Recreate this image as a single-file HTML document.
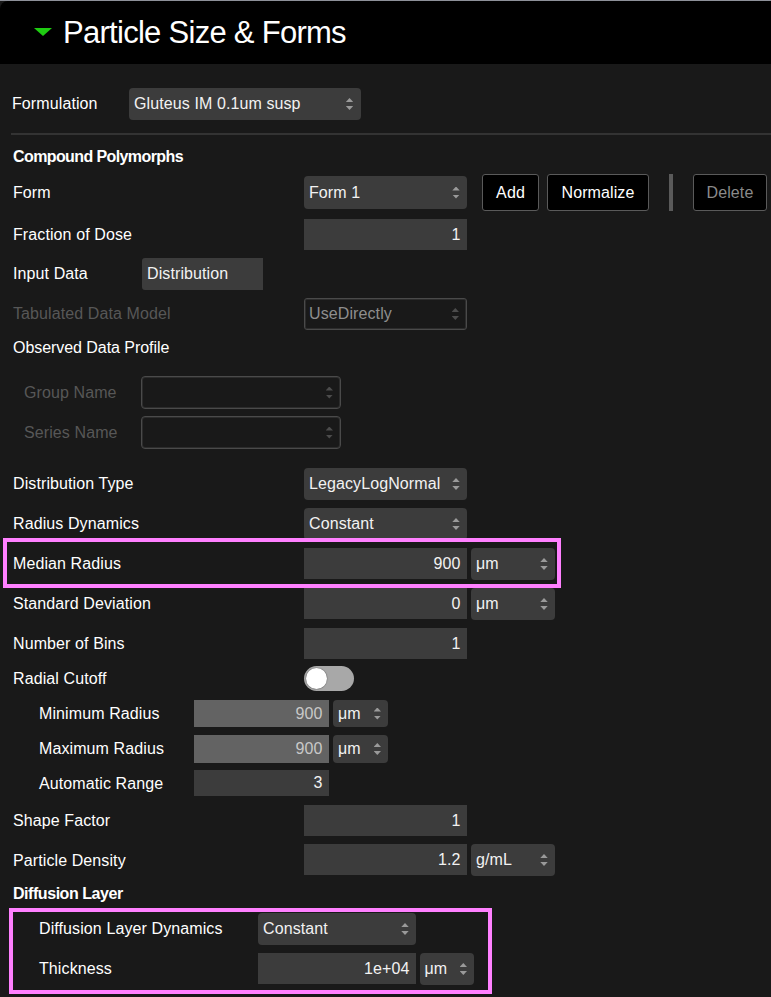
<!DOCTYPE html>
<html><head><meta charset="utf-8">
<style>
html,body{margin:0;padding:0;}
body{width:771px;height:997px;background:#191919;position:relative;overflow:hidden;font-family:"Liberation Sans",sans-serif;font-size:16px;color:#fff;letter-spacing:0.1px;}
.a{position:absolute;}
.topline{left:0;top:0;width:771px;height:1px;background:#8d9099;}
.hdr{left:0;top:1px;width:771px;height:63px;background:#000;border-top-left-radius:8px;}
.tri{left:34px;top:28px;width:0;height:0;border-left:9px solid transparent;border-right:9px solid transparent;border-top:8px solid #1fcc12;}
.title{left:63px;top:1px;height:63px;line-height:63px;font-size:31px;letter-spacing:-0.72px;color:#fff;white-space:nowrap;}
.lbl{display:flex;align-items:center;white-space:nowrap;left:13px;}
.dis{color:#575757;}
.bold{font-weight:bold;letter-spacing:-0.6px;}
.box{background:#3c3c3c;box-sizing:border-box;}
.combo{background:#3c3c3c;border-radius:4px;box-sizing:border-box;display:flex;align-items:center;padding-left:5px;white-space:nowrap;color:#f2f2f2;}
.inp{background:#3c3c3c;border-radius:0;box-sizing:border-box;display:flex;align-items:center;justify-content:flex-end;padding-right:6.5px;white-space:nowrap;color:#f2f2f2;}
.arr{position:absolute;right:7.3px;top:50%;width:7.4px;height:12px;margin-top:-6px;}
.arr:before{content:"";position:absolute;left:0;top:0;width:7.4px;height:4px;background:#9a9a9a;clip-path:polygon(50% 0,100% 100%,0 100%);}
.arr:after{content:"";position:absolute;left:0;top:8px;width:7.4px;height:4px;background:#9a9a9a;clip-path:polygon(0 0,100% 0,50% 100%);}
.dz:before,.dz:after{background:#4c4c4c;}
.btn{background:#000;border:1px solid #5a5a5a;border-radius:3px;box-sizing:border-box;display:flex;align-items:center;justify-content:center;color:#fff;white-space:nowrap;}
.pink{border:4px solid #ff80ff;box-sizing:border-box;}
</style></head>
<body>
<div class="a topline"></div>
<div class="a hdr"></div>
<div class="a tri"></div>
<div class="a title">Particle Size &amp; Forms</div>

<!-- Formulation -->
<div class="a lbl" style="left:12px;top:88px;height:32px;">Formulation</div>
<div class="a combo" style="left:129px;top:88px;width:231.5px;height:32px;">Gluteus IM 0.1um susp<span class="arr"></span></div>
<div class="a" style="left:11px;top:133px;width:760px;height:2px;background:#333;"></div>

<div class="a lbl bold" style="top:146px;height:22px;">Compound Polymorphs</div>

<div class="a lbl" style="top:176px;height:33px;">Form</div>
<div class="a combo" style="left:304px;top:176px;width:163px;height:33px;">Form 1<span class="arr"></span></div>
<div class="a btn" style="left:482px;top:174px;width:57px;height:37px;">Add</div>
<div class="a btn" style="left:547px;top:174px;width:102px;height:37px;">Normalize</div>
<div class="a" style="left:669px;top:174px;width:4px;height:37px;background:#5a5a5a;"></div>
<div class="a btn" style="left:693px;top:174px;width:74px;height:37px;color:#8a8a8a;">Delete</div>

<div class="a lbl" style="top:219px;height:31px;">Fraction of Dose</div>
<div class="a inp" style="left:304px;top:219px;width:163px;height:31px;">1</div>

<div class="a lbl" style="top:258px;height:32px;">Input Data</div>
<div class="a combo" style="left:142px;top:258px;width:121px;height:32px;border-radius:3px 0 0 3px;">Distribution</div>

<div class="a lbl dis" style="top:298px;height:31px;">Tabulated Data Model</div>
<div class="a combo" style="left:304px;top:298px;width:163px;height:32px;background:transparent;border:1px solid #4a4a4a;box-shadow:inset 0 0 0 1px #2c2c2c;border-radius:3px;color:#8e8e8e;padding-left:4px;">UseDirectly<span class="arr dz" style="right:7px;"></span></div>

<div class="a lbl" style="top:337px;height:22px;letter-spacing:-0.05px;">Observed Data Profile</div>

<div class="a lbl dis" style="left:24px;top:377px;height:32px;">Group Name</div>
<div class="a combo" style="left:141px;top:376px;width:200px;height:33px;background:transparent;border:1px solid #4a4a4a;box-shadow:inset 0 0 0 1px #2c2c2c;"><span class="arr dz" style="right:7px;"></span></div>
<div class="a lbl dis" style="left:24px;top:417px;height:32px;">Series Name</div>
<div class="a combo" style="left:141px;top:416px;width:200px;height:33px;background:transparent;border:1px solid #4a4a4a;box-shadow:inset 0 0 0 1px #2c2c2c;"><span class="arr dz" style="right:7px;"></span></div>

<div class="a lbl" style="top:468px;height:32px;">Distribution Type</div>
<div class="a combo" style="left:304px;top:468px;width:163px;height:32px;">LegacyLogNormal<span class="arr"></span></div>

<div class="a lbl" style="top:508px;height:32px;">Radius Dynamics</div>
<div class="a combo" style="left:304px;top:508px;width:163px;height:32px;">Constant<span class="arr"></span></div>

<div class="a lbl" style="top:548px;height:31px;">Median Radius</div>
<div class="a inp" style="left:304px;top:548px;width:163px;height:31px;">900</div>
<div class="a combo" style="left:471px;top:548px;width:84px;height:32px;">μm<span class="arr"></span></div>

<div class="a lbl" style="top:588px;height:31px;">Standard Deviation</div>
<div class="a inp" style="left:304px;top:588px;width:163px;height:31px;">0</div>
<div class="a combo" style="left:471px;top:588px;width:84px;height:32px;">μm<span class="arr"></span></div>

<div class="a lbl" style="top:628px;height:31px;">Number of Bins</div>
<div class="a inp" style="left:304px;top:628px;width:163px;height:31px;">1</div>

<div class="a lbl" style="top:666px;height:25px;">Radial Cutoff</div>
<div class="a" style="left:304px;top:666px;width:50px;height:25px;border-radius:13px;background:#a8a8a8;"></div>
<div class="a" style="left:305.8px;top:667.8px;width:21.4px;height:21.4px;border-radius:50%;background:#fff;box-shadow:0 0 1px 0.3px #6a6a6a;"></div>

<div class="a lbl" style="left:39px;top:700px;height:27px;">Minimum Radius</div>
<div class="a inp" style="left:194px;top:700px;width:135px;height:27px;background:#636363;color:#c8c8c8;">900</div>
<div class="a combo" style="left:333px;top:700px;width:55px;height:27px;">μm<span class="arr" style="right:7px"></span></div>

<div class="a lbl" style="left:39px;top:735px;height:28px;">Maximum Radius</div>
<div class="a inp" style="left:194px;top:735px;width:135px;height:28px;background:#636363;color:#c8c8c8;">900</div>
<div class="a combo" style="left:333px;top:735px;width:55px;height:28px;">μm<span class="arr" style="right:7px"></span></div>

<div class="a lbl" style="left:39px;top:771px;height:26px;">Automatic Range</div>
<div class="a inp" style="left:194px;top:770px;width:135px;height:26px;">3</div>

<div class="a lbl" style="top:805px;height:31px;">Shape Factor</div>
<div class="a inp" style="left:304px;top:805px;width:163px;height:31px;">1</div>

<div class="a lbl" style="top:845px;height:31px;">Particle Density</div>
<div class="a inp" style="left:304px;top:844px;width:163px;height:31px;">1.2</div>
<div class="a combo" style="left:471px;top:844px;width:84px;height:32px;">g/mL<span class="arr"></span></div>

<div class="a lbl bold" style="top:883px;height:22px;letter-spacing:-0.45px;">Diffusion Layer</div>

<div class="a lbl" style="left:39px;top:913px;height:31px;">Diffusion Layer Dynamics</div>
<div class="a combo" style="left:258px;top:913px;width:158px;height:32px;">Constant<span class="arr"></span></div>

<div class="a lbl" style="left:39px;top:953px;height:31px;">Thickness</div>
<div class="a inp" style="left:258px;top:953px;width:158px;height:31px;">1e+04</div>
<div class="a combo" style="left:419.5px;top:953px;width:54.5px;height:32px;">μm<span class="arr" style="right:7px"></span></div>

<div class="a pink" style="left:3px;top:538px;width:558px;height:50px;"></div>
<div class="a pink" style="left:9px;top:908px;width:483px;height:86px;"></div>
</body></html>
